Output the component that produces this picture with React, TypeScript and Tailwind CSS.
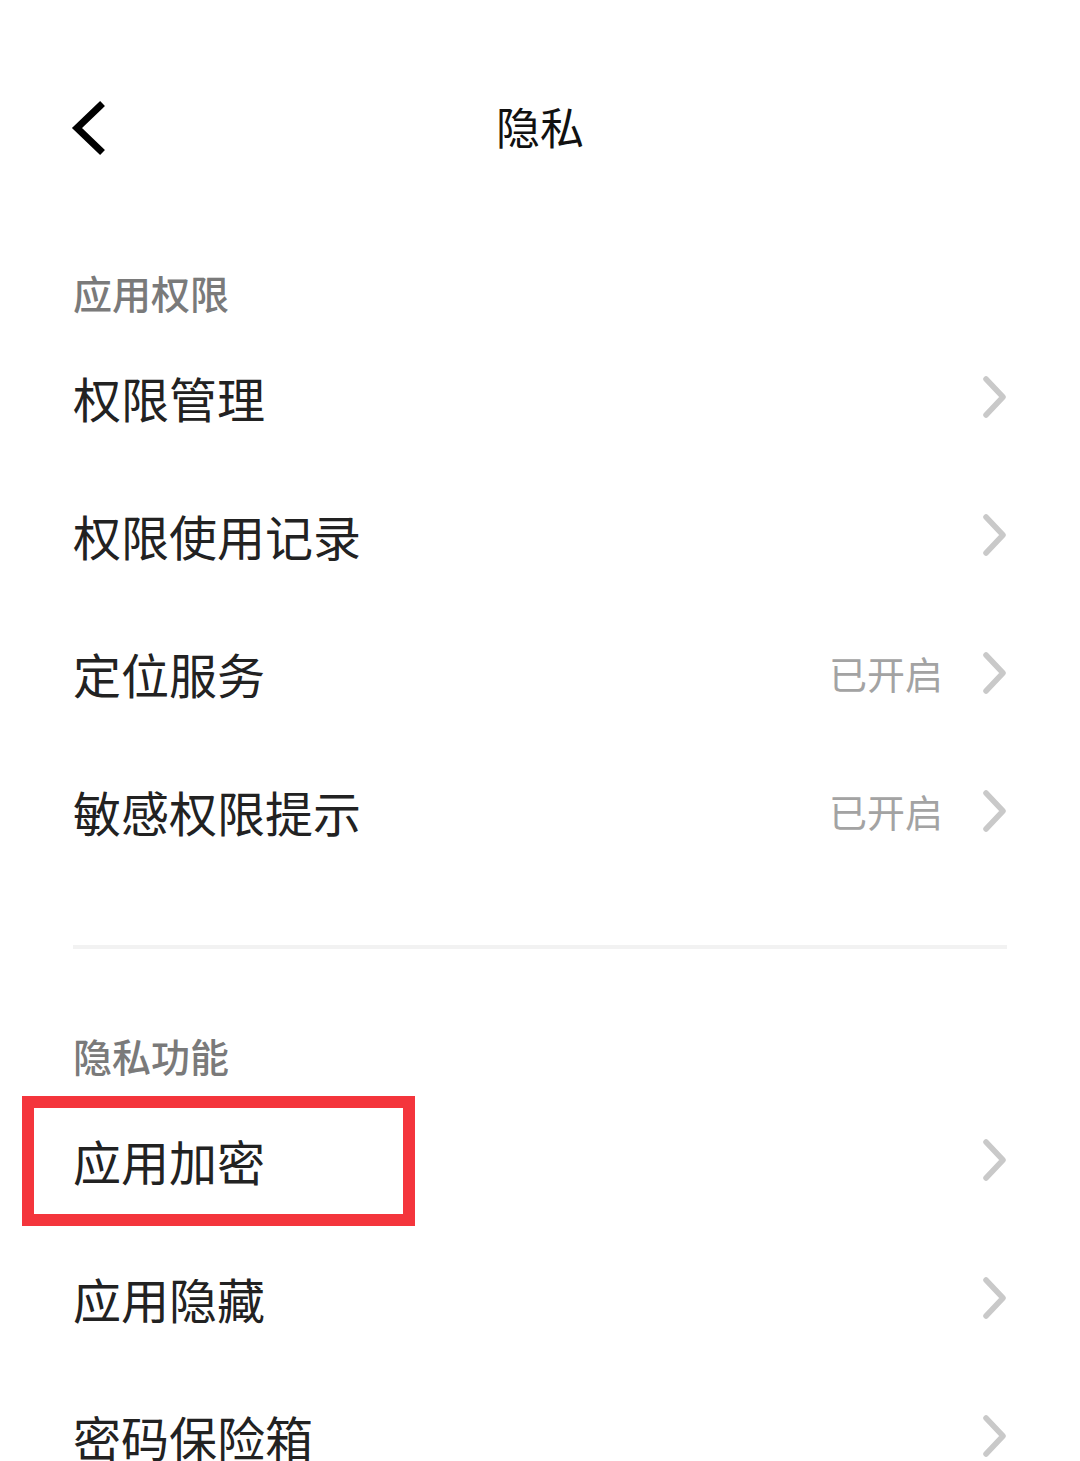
import React from 'react';

interface Row {
    label: string;
    value?: string;
    marked?: boolean;
}

const font = { fontFamily: '"Noto Sans CJK SC", "Noto Sans", sans-serif' };

const Chevron: React.FC = () => (
    <svg width="24" height="42" viewBox="0 0 24 42" className="shrink-0">
        <polyline points="3,3 20,21 3,39" fill="none" stroke="#c9c9c9" strokeWidth="5.5" strokeLinecap="round" strokeLinejoin="round" />
    </svg>
);

const SettingRow: React.FC<{ row: Row }> = ({ row }) => (
    <div className="relative flex h-[138px] items-center pl-[73px] pr-[73px]">
        <span className="flex-1 text-[48px] leading-none text-[#222222]">{row.label}</span>
        {row.value && <span className="mr-[40px] text-[38px] leading-none text-[#a3a3a3]">{row.value}</span>}
        <Chevron />
        {row.marked && (
            <div className="absolute left-[22px] top-[5px] h-[130px] w-[393px] border-[12px] border-[#f4353c]" />
        )}
    </div>
);

const SectionLabel: React.FC<{ text: string }> = ({ text }) => (
    <div className="flex h-[72px] items-center pl-[73px] text-[39px] font-medium leading-none text-[#7a7a7a]">{text}</div>
);

const permissions: Row[] = [
    { label: '权限管理' },
    { label: '权限使用记录' },
    { label: '定位服务', value: '已开启' },
    { label: '敏感权限提示', value: '已开启' },
];

const features: Row[] = [
    { label: '应用加密', marked: true },
    { label: '应用隐藏' },
    { label: '密码保险箱' },
];

export default function App() {
    return (
        <div className="h-[1461px] w-[1080px] overflow-hidden bg-white" style={font}>
            <header className="relative flex h-[256px] items-center justify-center">
                <svg width="40" height="60" viewBox="0 0 40 60" className="absolute left-[68px] top-[98px]">
                    <polyline points="32,8 9,30 32,52" fill="none" stroke="#000000" strokeWidth="7" strokeLinecap="square" strokeLinejoin="miter" />
                </svg>
                <h1 className="-mt-[4px] text-[44px] font-normal leading-none text-[#111111]">隐私</h1>
            </header>
            <SectionLabel text="应用权限" />
            {permissions.map((r) => (
                <SettingRow key={r.label} row={r} />
            ))}
            <div className="mx-[73px] mt-[65px] h-[4px] bg-[#f2f2f2]" />
            <div className="mt-[70px]">
                <SectionLabel text="隐私功能" />
            </div>
            {features.map((r) => (
                <SettingRow key={r.label} row={r} />
            ))}
        </div>
    );
}
